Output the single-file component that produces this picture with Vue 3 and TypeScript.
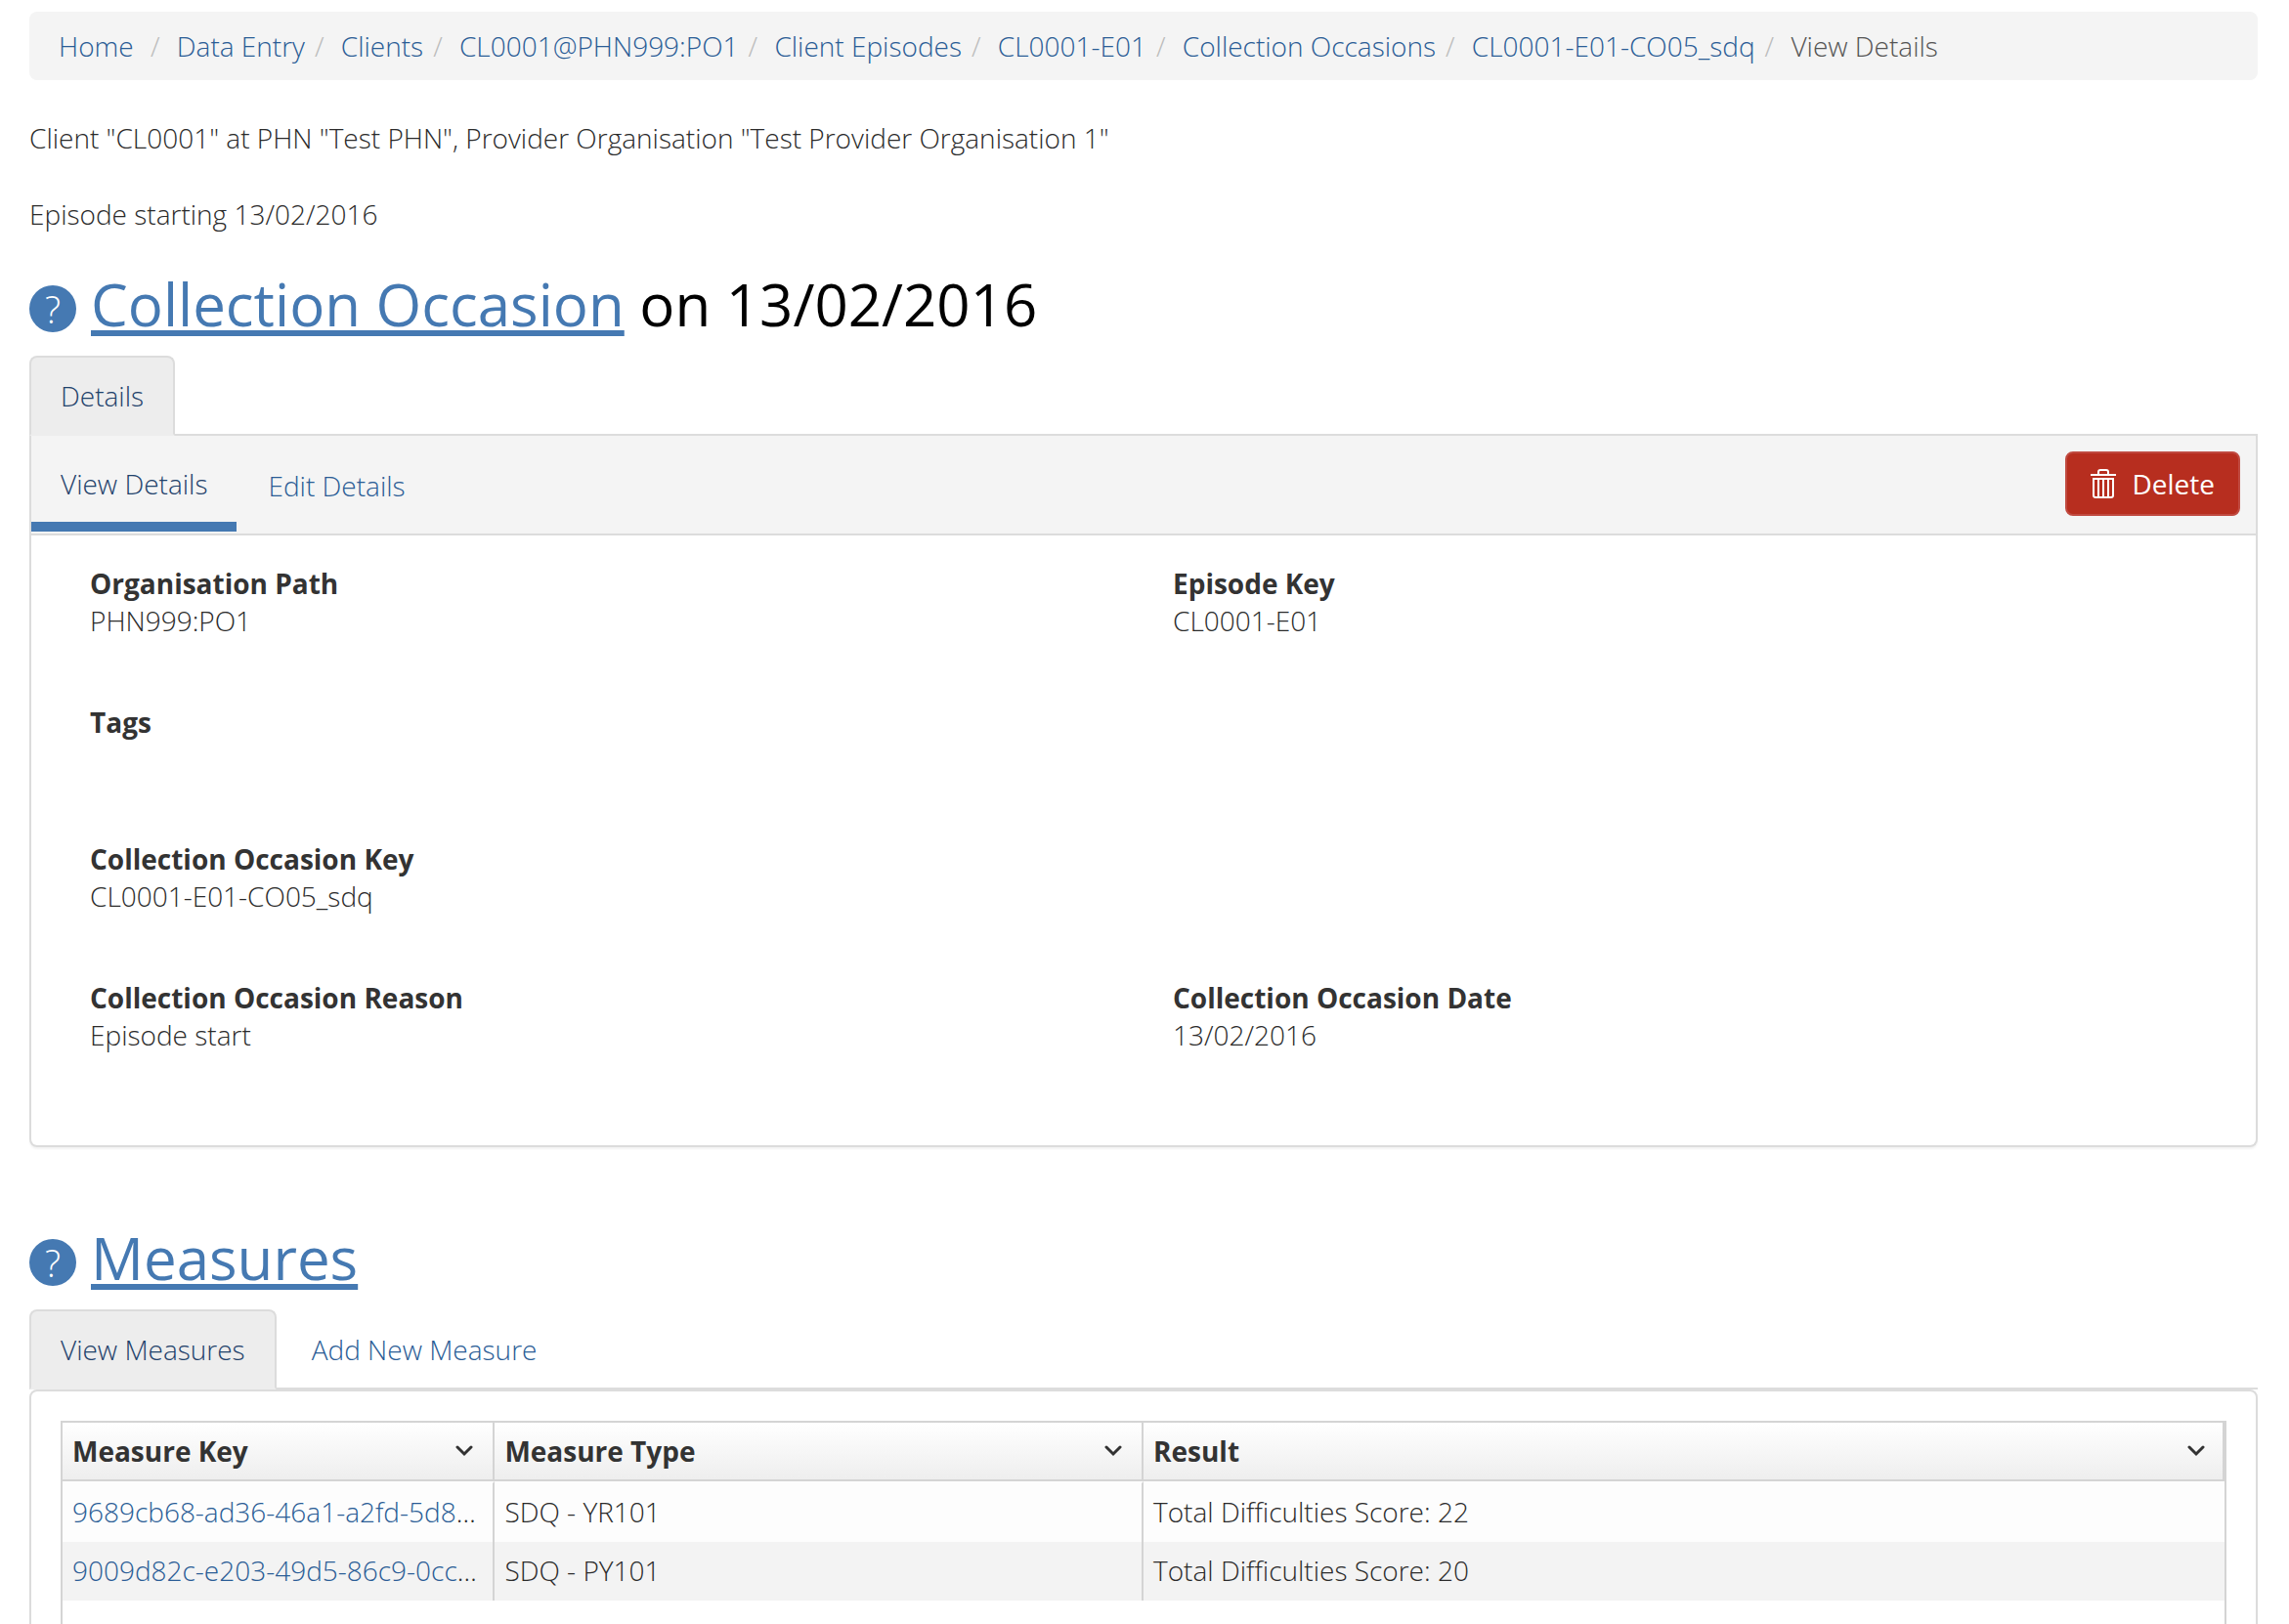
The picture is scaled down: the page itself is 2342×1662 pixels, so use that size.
<script setup lang="ts">
interface Crumb {
  label: string
}

interface Field {
  label: string
  value: string
  wide?: boolean
}

interface Measure {
  key: string
  type: string
  result: string
}

const crumbs: Crumb[] = [
  { label: 'Home\u00a0' },
  { label: 'Data Entry' },
  { label: 'Clients' },
  { label: 'CL0001@PHN999:PO1' },
  { label: 'Client Episodes' },
  { label: 'CL0001-E01' },
  { label: 'Collection Occasions' },
  { label: 'CL0001-E01-CO05_sdq' },
]

const fields: Field[] = [
  { label: 'Organisation Path', value: 'PHN999:PO1' },
  { label: 'Episode Key', value: 'CL0001-E01' },
  { label: 'Tags', value: '', wide: true },
  { label: 'Collection Occasion Key', value: 'CL0001-E01-CO05_sdq', wide: true },
  { label: 'Collection Occasion Reason', value: 'Episode start' },
  { label: 'Collection Occasion Date', value: '13/02/2016' },
]

const columns: string[] = ['Measure Key', 'Measure Type', 'Result']

const measures: Measure[] = [
  { key: '9689cb68-ad36-46a1-a2fd-5d8', type: 'SDQ - YR101', result: 'Total Difficulties Score: 22' },
  { key: '9009d82c-e203-49d5-86c9-0cc', type: 'SDQ - PY101', result: 'Total Difficulties Score: 20' },
]
</script>

<template>
  <main class="page">
    <nav aria-label="Breadcrumb">
      <ol class="breadcrumb">
        <li v-for="crumb in crumbs" :key="crumb.label"><a href="#">{{ crumb.label }}</a></li>
        <li class="current" aria-current="page">View Details</li>
      </ol>
    </nav>

    <p class="summary">Client "CL0001" at PHN "Test PHN", Provider Organisation "Test Provider Organisation 1"</p>
    <p class="summary">Episode starting 13/02/2016</p>

    <section>
      <h1 class="heading">
        <a href="#" class="help" aria-label="Help">?</a>
        <span><a href="#">Collection Occasion</a> on 13/02/2016</span>
      </h1>
      <ul class="tabs">
        <li><a href="#" class="tab active">Details</a></li>
      </ul>
      <div class="panel joined">
        <div class="subnav">
          <ul class="pills">
            <li><a href="#" class="pill active">View Details</a></li>
            <li><a href="#" class="pill">Edit Details</a></li>
          </ul>
          <button type="button" class="delete">
            <svg width="26" height="30" viewBox="0 0 26 30" fill="none" stroke="#fff" stroke-width="2" aria-hidden="true">
              <path d="M0 6h26M8 5V3a2 2 0 0 1 2-2h6a2 2 0 0 1 2 2v2" />
              <path d="M3 10h20v17a2 2 0 0 1-2 2H5a2 2 0 0 1-2-2zM8 10v19M13 10v19M18 10v19" />
            </svg>
            Delete
          </button>
        </div>
        <dl class="fields">
          <div v-for="field in fields" :key="field.label" class="field" :class="{ wide: field.wide }">
            <dt>{{ field.label }}</dt>
            <dd>{{ field.value }}</dd>
          </div>
        </dl>
      </div>
    </section>

    <section class="measures">
      <h2 class="heading">
        <a href="#" class="help" aria-label="Help">?</a>
        <a href="#">Measures</a>
      </h2>
      <ul class="tabs">
        <li><a href="#" class="tab active">View Measures</a></li>
        <li><a href="#" class="tab">Add New Measure</a></li>
      </ul>
      <div class="panel list">
        <div class="grid">
          <table>
            <thead>
              <tr>
                <th v-for="column in columns" :key="column" scope="col">
                  <div class="column-title">
                    {{ column }}
                    <button type="button" class="menu" :aria-label="column + ' menu'">
                      <svg width="18" height="12" viewBox="0 0 18 12" fill="none" stroke="#333" stroke-width="3" stroke-linecap="round" aria-hidden="true">
                        <path d="M2 2l7 7 7-7" />
                      </svg>
                    </button>
                  </div>
                </th>
              </tr>
            </thead>
            <tbody>
              <tr v-for="measure in measures" :key="measure.key">
                <td><a href="#">{{ measure.key }}</a>…</td>
                <td>{{ measure.type }}</td>
                <td>{{ measure.result }}</td>
              </tr>
            </tbody>
          </table>
        </div>
      </div>
    </section>
  </main>
</template>

<style>
body {
  margin: 0;
  background: #fff;
}
</style>

<style scoped>
.page {
  box-sizing: border-box;
  height: 100vh;
  overflow: hidden;
  padding: 12px 32px 0 30px;
  font-family: 'Open Sans', 'Noto Sans', sans-serif;
  font-size: 28px;
  font-weight: 300;
  line-height: 38px;
  color: #2b2b2b;
}

a {
  color: #2b5d96;
  text-decoration: none;
}

ol,
ul,
dl,
dd {
  margin: 0;
  padding: 0;
  list-style: none;
}

.breadcrumb {
  display: flex;
  flex-wrap: wrap;
  padding: 16px 30px;
  background: #f4f4f4;
  border-radius: 8px;
}

.breadcrumb li + li::before {
  content: '/\00a0';
  padding: 0 10px;
  color: #bbb;
}

.breadcrumb .current {
  color: #555;
}

.summary {
  margin: 40px 0 0;
}

.heading {
  display: flex;
  align-items: center;
  gap: 15px;
  margin: 32px 0 12px;
  font-size: 60px;
  font-weight: 400;
  line-height: 82px;
  color: #000;
}

.heading a {
  color: #4579b2;
  text-decoration: underline;
  text-decoration-thickness: 6px;
  text-underline-offset: 4px;
  text-decoration-skip-ink: none;
}

.heading .help {
  width: 48px;
  height: 48px;
  margin-top: 10px;
  border-radius: 50%;
  background: #4579b2;
  color: #fff;
  font-size: 38px;
  font-weight: 300;
  line-height: 48px;
  text-align: center;
  text-decoration: none;
}

.tabs {
  display: flex;
  gap: 4px;
  border-bottom: 2px solid #dcdcdc;
}

.tab {
  display: block;
  margin-bottom: -2px;
  padding: 20px 30px;
  border: 2px solid transparent;
  border-radius: 8px 8px 0 0;
}

.tab.active {
  border-color: #dcdcdc #dcdcdc #ededed;
  background: #ededed;
  color: #1f426b;
}

.panel {
  border: 2px solid #dcdcdc;
  border-radius: 8px;
  background: #fff;
  box-shadow: 0 2px 2px rgba(0, 0, 0, 0.05);
}

.panel.joined {
  border-top: 0;
  border-radius: 0 0 8px 8px;
}

.subnav {
  display: flex;
  align-items: flex-start;
  justify-content: space-between;
  padding-right: 16px;
  border-bottom: 2px solid #dcdcdc;
  background: #f4f4f4;
}

.pills {
  display: flex;
  align-items: flex-start;
  gap: 2px;
}

.pill {
  display: block;
  padding: 32px 30px 30px;
}

.pill.active {
  padding: 30px 30px 20px;
  border-bottom: 10px solid #4579b2;
  color: #1f426b;
}

.delete {
  display: flex;
  align-items: center;
  gap: 16px;
  margin-top: 16px;
  padding: 12px 24px;
  border: 2px solid #c04a40;
  border-radius: 8px;
  background: #b72e1f;
  color: #fff;
  font: inherit;
  font-weight: 400;
}

.fields {
  display: grid;
  grid-template-columns: 1fr 1fr;
  padding: 30px 0 28px 60px;
}

.field {
  padding-bottom: 66px;
}

.field.wide {
  grid-column: 1 / -1;
}

dt {
  color: #333;
  font-weight: 700;
}

dd {
  min-height: 36px;
}

.measures {
  margin-top: 72px;
}

.list {
  padding: 30px;
}

.grid {
  min-height: 400px;
  border: 2px solid #d4d4d4;
}

table {
  width: 100%;
  table-layout: fixed;
  border-collapse: separate;
  border-spacing: 0;
}

th,
td {
  box-sizing: border-box;
  padding: 10px 10px 12px;
  border-right: 2px solid #d4d4d4;
  text-align: left;
  white-space: nowrap;
}

th {
  padding-bottom: 10px;
  border-bottom: 2px solid #d4d4d4;
  background: linear-gradient(#fff, #eee);
  background-clip: padding-box;
  color: #333;
  font-weight: 700;
}

th:nth-child(1) {
  width: 20%;
}

th:nth-child(2) {
  width: 30%;
}

th:last-child {
  padding-right: 8px;
}

td {
  background: #fdfdfd;
}

td:last-child {
  border-right: 0;
}

tbody tr:first-child td {
  border-top: 2px solid #fdfdfd;
}

tbody tr:nth-child(even) td {
  background: #f3f3f3;
}

.column-title {
  display: flex;
  align-items: center;
  justify-content: space-between;
}

.menu {
  display: flex;
  margin-right: 10px;
  padding: 0;
  border: 0;
  background: none;
}
</style>
